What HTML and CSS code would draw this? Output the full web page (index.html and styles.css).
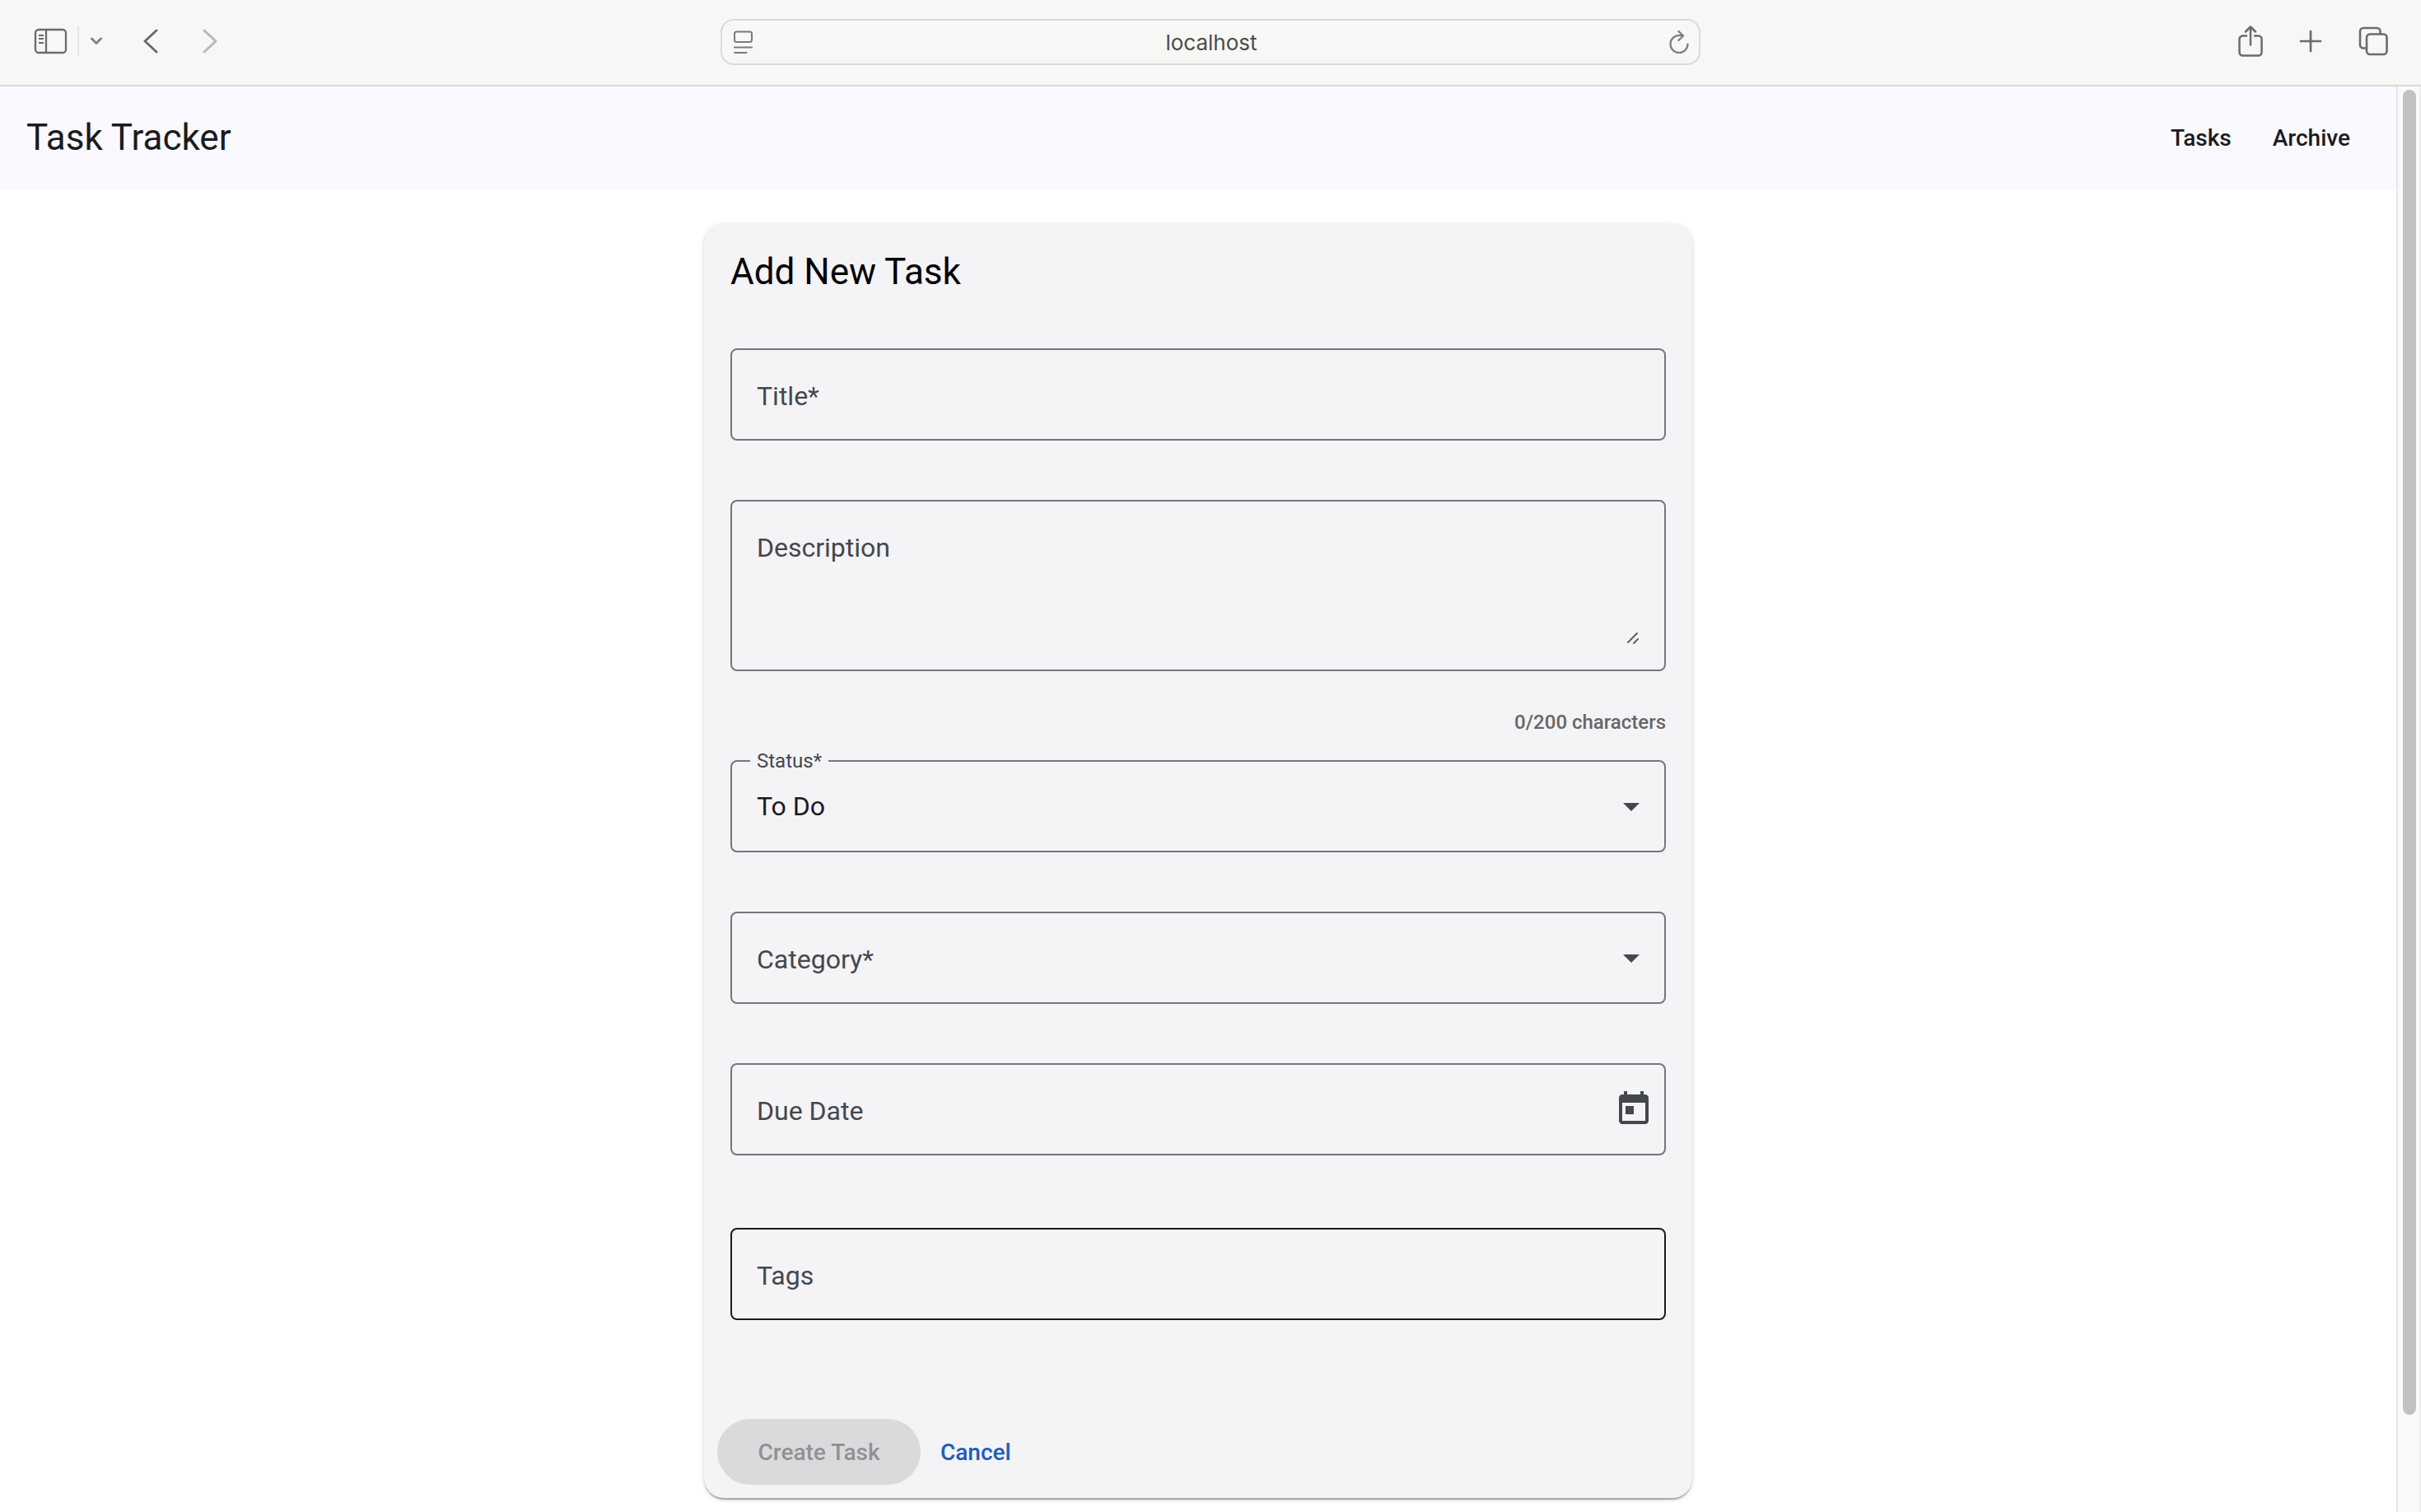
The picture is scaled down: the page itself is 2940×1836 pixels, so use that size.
FILE: index.html
```html
<!DOCTYPE html>
<html lang="en">
<head>
<meta charset="utf-8">
<title>Task Tracker</title>
<meta name="viewport" content="width=device-width, initial-scale=1">
<link rel="stylesheet" href="styles.css">
</head>
<body>
<div class="browser">
  <div class="toolbar">
    <div class="toolbar-side">
      <button class="tool sidebar-toggle" type="button" aria-label="Show sidebar"><svg width="42" height="32" viewBox="0 0 42 32" fill="none" stroke="currentColor" stroke-width="2.300"><rect x="3" y="2" width="37" height="28" rx="4"/><path d="M16 2v28"/><path stroke-width="2" d="M7 9h6M7 13h6M7 18h6"/></svg></button>
      <span class="divider"></span>
      <button class="tool tab-groups" type="button" aria-label="Tab groups"><svg width="14" height="10" viewBox="0 0 14 10" fill="none" stroke="currentColor" stroke-width="3" stroke-linecap="round" stroke-linejoin="round"><path d="M1.500 2L7 7.500L12.500 2"/></svg></button>
      <button class="tool back" type="button" aria-label="Back"><svg width="18" height="30" viewBox="0 0 18 30" fill="none" stroke="currentColor" stroke-width="3" stroke-linecap="round" stroke-linejoin="round"><path d="M16 2L2 15L16 28"/></svg></button>
      <button class="tool forward" type="button" aria-label="Forward"><svg width="18" height="30" viewBox="0 0 18 30" fill="none" stroke="currentColor" stroke-width="3" stroke-linecap="round" stroke-linejoin="round"><path d="M2 2L16 15L2 28"/></svg></button>
    </div>
    <div class="address">
      <button class="tool" type="button" aria-label="Page menu"><svg width="24" height="28" viewBox="0 0 24 28" fill="none" stroke="currentColor" stroke-width="2" stroke-linecap="round"><rect x="1" y="1.500" width="21" height="12.500" rx="2.500"/><path d="M1 20.500h21M1 27h14.500"/></svg></button>
      <input class="url" type="text" value="localhost" aria-label="Address">
      <button class="tool" type="button" aria-label="Reload"><svg width="26" height="30" viewBox="0 0 26 30" fill="none" stroke="currentColor" stroke-width="2.200" stroke-linecap="round" stroke-linejoin="round"><path d="M22.500 17.500A10.500 10.500 0 1 1 12 7H17M11.500 2L17 7.500L11.500 13"/></svg></button>
    </div>
    <div class="toolbar-side toolbar-end">
      <button class="tool" type="button" aria-label="Share"><svg width="30" height="38" viewBox="0 0 30 38" fill="none" stroke="currentColor" stroke-width="2.500" stroke-linecap="round" stroke-linejoin="round"><path d="M10 12.500H5.500a4 4 0 0 0-4 4v16a4 4 0 0 0 4 4h19a4 4 0 0 0 4-4v-16a4 4 0 0 0-4-4H20M15 23.500V2M9 7.500l6-6l6 6"/></svg></button>
      <button class="tool" type="button" aria-label="New tab"><svg width="28" height="28" viewBox="0 0 28 28" fill="none" stroke="currentColor" stroke-width="2.700" stroke-linecap="round"><path d="M14 2v24M2 14h24"/></svg></button>
      <button class="tool" type="button" aria-label="Tab overview"><svg width="36" height="36" viewBox="0 0 36 36" fill="none" stroke="currentColor" stroke-width="2.600" stroke-linejoin="round"><rect x="10" y="9.500" width="24.500" height="24.500" rx="4"/><path d="M9.500 26.500H6a4 4 0 0 1-4-4V6a4 4 0 0 1 4-4h16.500a4 4 0 0 1 4 4v3"/></svg></button>
    </div>
  </div>
  <div class="viewport">
    <div class="page">
      <header class="app-bar">
        <h1 class="brand">Task Tracker</h1>
        <nav class="nav"><a class="nav-link" href="#tasks">Tasks</a><a class="nav-link" href="#archive">Archive</a></nav>
      </header>
      <main class="content">
        <form class="card">
          <h2 class="card-title">Add New Task</h2>
          <div class="fields">
            <div class="field">
              <label class="label" for="title">Title*</label>
              <input class="control" id="title" type="text">
            </div>
            <div class="field field-area">
              <label class="label" for="description">Description</label>
              <textarea class="control" id="description"></textarea>
              <svg class="grip" width="16" height="16" viewBox="0 0 16 16" fill="none" stroke="#5f5f62" stroke-width="2" stroke-linecap="round"><path d="M2 13L13 2M9 14l5-5"/></svg>
            </div>
            <p class="counter">0/200 characters</p>
            <div class="field">
              <label class="label label-float" for="status">Status*</label>
              <select class="control" id="status"><option>To Do</option></select>
              <svg class="arrow" width="20" height="10" viewBox="0 0 20 10"><path d="M0 0h20L10 10z" fill="#44474e"/></svg>
            </div>
            <div class="field">
              <label class="label" for="category">Category*</label>
              <select class="control" id="category"><option></option></select>
              <svg class="arrow" width="20" height="10" viewBox="0 0 20 10"><path d="M0 0h20L10 10z" fill="#44474e"/></svg>
            </div>
            <div class="field">
              <label class="label" for="due">Due Date</label>
              <input class="control" id="due" type="text">
              <button class="calendar" type="button" aria-label="Open calendar"><svg width="48" height="48" viewBox="0 0 24 24"><path fill="#44474e" d="M19 3h-1V1h-2v2H8V1H6v2H5c-1.110 0-1.990.900-1.990 2L3 19c0 1.100.890 2 2 2h14c1.100 0 2-.900 2-2V5c0-1.100-.900-2-2-2zm0 16H5V8h14v11zM7 10h5v5H7z"/></svg></button>
            </div>
            <div class="field field-tags">
              <label class="label" for="tags">Tags</label>
              <input class="control" id="tags" type="text">
            </div>
          </div>
          <div class="actions">
            <button class="btn btn-primary" type="submit" disabled>Create Task</button>
            <button class="btn btn-text" type="button">Cancel</button>
          </div>
        </form>
      </main>
    </div>
    <div class="scrollbar"><div class="thumb"></div></div>
  </div>
</div>
</body>
</html>
```

FILE: styles.css
```css
* {
  box-sizing: border-box;
}

body {
  margin: 0;
  background: #fff;
  color: #1a1b1f;
  font-family: Roboto, "Liberation Sans", sans-serif;
}

button,
input,
select,
textarea {
  margin: 0;
  padding: 0;
  border: 0;
  background: none;
  color: inherit;
  font: inherit;
  outline: 0;
}

svg {
  display: block;
}

.browser {
  display: flex;
  flex-direction: column;
  min-height: 100vh;
}

/* Browser toolbar */

.toolbar {
  display: grid;
  grid-template-columns: 1fr minmax(400px, 1190px) 1fr;
  align-items: center;
  height: 105px;
  padding: 0 40px 1px;
  border-bottom: 2px solid #d9d9db;
  background: #f7f7f5;
  color: #6b6b6a;
}

.toolbar-side {
  display: flex;
  align-items: center;
  padding-bottom: 2px;
}

.toolbar-end {
  justify-content: flex-end;
  gap: 44px;
}

.divider {
  width: 2px;
  height: 36px;
  margin: 0 14px 0 12px;
  background: #e6e6e4;
}

.tab-groups {
  color: #858584;
}

.back {
  margin-left: 50px;
}

.forward {
  margin-left: 54px;
  color: #b8b8b7;
}

.address {
  display: flex;
  align-items: center;
  height: 56px;
  padding: 0 10px 0 14px;
  border: 2px solid #dadad8;
  border-radius: 16px;
  color: #7a7a79;
}

.url {
  flex: 1;
  min-width: 0;
  color: #4c4c4b;
  font-family: Inter, "Liberation Sans", sans-serif;
  font-size: 26px;
  text-align: center;
}

/* Application */

.viewport {
  display: flex;
  flex: 1;
}

.page {
  flex: 1;
  min-width: 0;
}

.app-bar {
  display: flex;
  align-items: center;
  justify-content: space-between;
  height: 126px;
  padding: 0 56px 0 32px;
  background: #faf9ff;
}

.brand,
.card-title {
  margin: 0;
  font-size: 44px;
  font-weight: 400;
  line-height: 56px;
}

.brand {
  padding-bottom: 2px;
}

.nav {
  display: flex;
  gap: 50px;
}

.nav-link {
  color: inherit;
  font-size: 28px;
  font-weight: 500;
  line-height: 40px;
  text-decoration: none;
}

.content {
  padding: 40px 32px 16px;
}

.card {
  max-width: 1200px;
  margin: 0 auto;
  border-radius: 24px;
  background: #f4f3f6;
  box-shadow: 0 4px 2px -2px rgba(0, 0, 0, 0.2), 0 2px 2px rgba(0, 0, 0, 0.14), 0 2px 6px rgba(0, 0, 0, 0.12);
}

.card-title {
  padding: 31px 32px 1px;
  color: #000;
}

.fields {
  display: flex;
  flex-direction: column;
  gap: 72px;
  padding: 64px 32px 120px;
}

.field {
  position: relative;
  height: 112px;
  border: 2px solid #74777f;
  border-radius: 8px;
  color: #1a1b1f;
}

.field-area {
  height: 208px;
}

.field-tags {
  margin-top: 16px;
  border-color: #1a1b1f;
}

.control {
  display: block;
  width: 100%;
  height: 100%;
  padding: 0 30px;
  border-radius: 6px;
  font-size: 32px;
  appearance: none;
  resize: none;
}

.label {
  position: absolute;
  top: 32px;
  left: 30px;
  color: #44474e;
  font-size: 32px;
  line-height: 48px;
  pointer-events: none;
}

.label-float {
  top: -17px;
  left: 22px;
  padding: 0 8px;
  background: #f4f3f6;
  font-size: 24px;
  line-height: 32px;
}

.grip {
  position: absolute;
  right: 30px;
  bottom: 30px;
}

.arrow {
  position: absolute;
  top: 50px;
  right: 30px;
  pointer-events: none;
}

.calendar {
  position: absolute;
  top: 30px;
  right: 13px;
}

/* The counter sits inside the space between its two neighbours */
.counter {
  margin: -32px 0 -48px;
  padding: 6px 0;
  color: #666;
  font-size: 24px;
  font-weight: 500;
  line-height: 32px;
  text-align: right;
}

.actions {
  display: flex;
  padding: 0 16px 16px;
}

.btn {
  height: 80px;
  border-radius: 40px;
  font-size: 28px;
  font-weight: 500;
}

.btn-primary {
  min-width: 247px;
  padding: 0 48px;
  background: #dadadc;
  color: #919193;
}

.btn-text {
  padding: 0 24px;
  color: #225bb9;
}

/* Scroll bar */

.scrollbar {
  width: 30px;
  padding: 4px 4px 118px 6px;
  border-left: 2px solid #e8e8e8;
  border-right: 2px solid #ededed;
  background: #fafafa;
}

.thumb {
  width: 16px;
  height: 100%;
  border-radius: 8px;
  background: #c1c1c1;
}
```
